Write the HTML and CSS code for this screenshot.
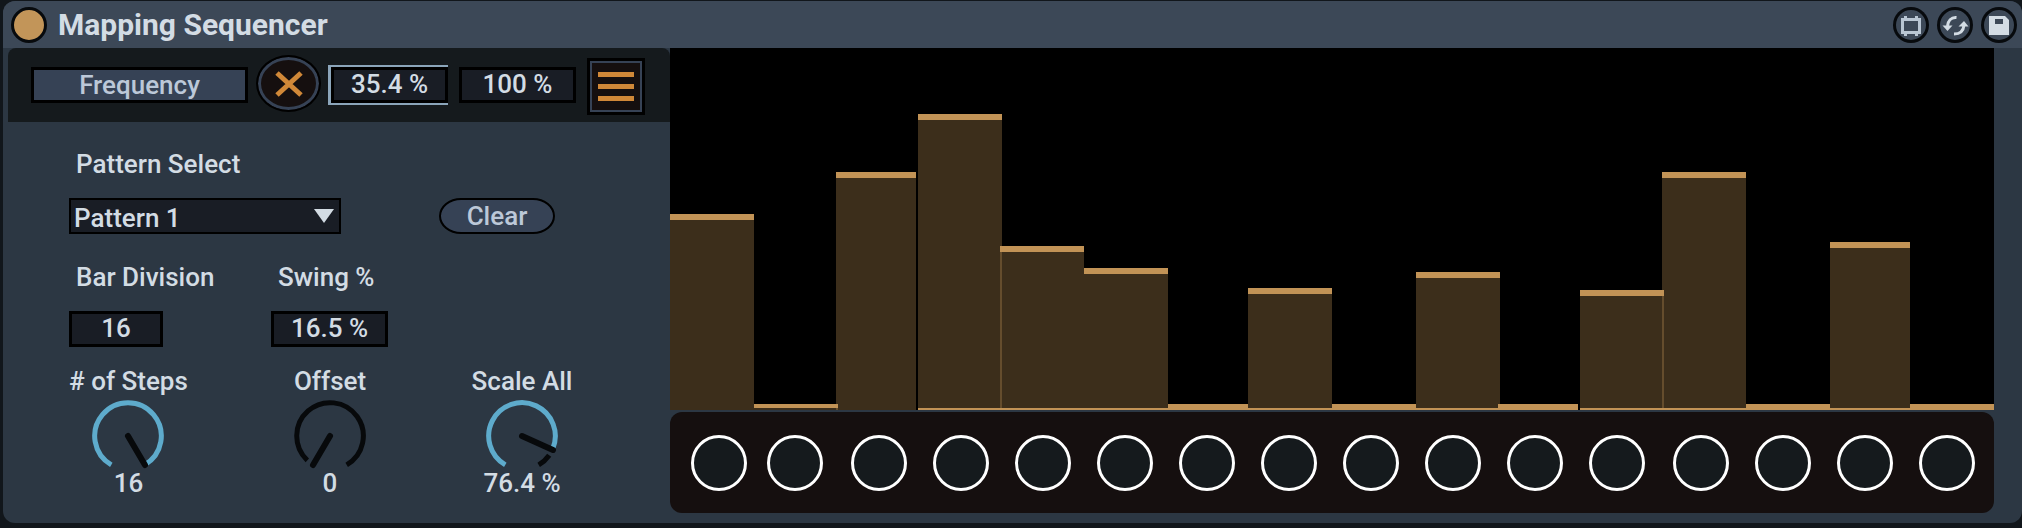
FILE: index.html
```html
<!DOCTYPE html>
<html lang="en">
<head>
<meta charset="utf-8">
<title>Mapping Sequencer</title>
<link rel="stylesheet" href="styles.css">
</head>
<body>
<main class="device">
  <header class="titlebar">
    <button class="power" type="button" aria-label="Device on"></button>
    <h1 class="title">Mapping Sequencer</h1>
    <div class="tools">
      <button class="tool" type="button" aria-label="Open editor">
        <svg viewBox="0 0 36 36"><path d="M9.500 12.500H26.500V25.500H9.500ZM12.500 12V9M23.500 12V9M12.500 26V29M23.500 26V29" fill="none" stroke="#b9c6d3" stroke-width="3"/></svg>
      </button>
      <button class="tool" type="button" aria-label="Hot-swap">
        <svg viewBox="0 0 36 36"><g fill="none" stroke="#d3dce4" stroke-width="3"><path d="M19.500 10.500C14 10 11 14 10.500 19"/><path d="M17 27C23 27 26.500 24 27 18"/></g><g fill="#d3dce4"><path d="M5.500 18.500H15.500L10.500 24Z"/><path d="M21.500 19.500H31.500L27 14Z"/></g></svg>
      </button>
      <button class="tool" type="button" aria-label="Save preset">
        <svg viewBox="0 0 36 36"><path fill-rule="evenodd" d="M8 9H24L28 13V28H8ZM14 12V17H22V12Z" fill="#d3dce4"/></svg>
      </button>
    </div>
  </header>

  <div class="body">
    <section class="side">
      <div class="mapbar">
        <button class="map-target" type="button">Frequency</button>
        <button class="unmap" type="button" aria-label="Remove mapping">
          <svg viewBox="0 0 28 26"><path d="M2 2L26 24M26 2L2 24" stroke="#d08838" stroke-width="5"/></svg>
        </button>
        <span class="focus-frame"><input class="number range-number" type="text" value="35.4 %" aria-label="Minimum"></span>
        <input class="number range-number" type="text" value="100 %" aria-label="Maximum">
        <button class="menu" type="button" aria-label="Mappings"><span class="line"></span><span class="line"></span><span class="line"></span></button>
      </div>

      <form class="controls">
        <div class="row pattern-row">
          <div class="field">
            <label class="label" for="pattern">Pattern Select</label>
            <span class="picker">
              <select id="pattern"><option>Pattern 1</option></select>
              <svg class="arrow" viewBox="0 0 20 14"><path d="M0 0H20L10 14Z"/></svg>
            </span>
          </div>
          <button class="clear" type="button">Clear</button>
        </div>

        <div class="row timing-row">
          <div class="field">
            <label class="label" for="division">Bar Division</label>
            <input class="number division" id="division" type="text" value="16">
          </div>
          <div class="field">
            <label class="label" for="swing">Swing %</label>
            <input class="number range-number" id="swing" type="text" value="16.5 %">
          </div>
        </div>

        <div class="row knob-row">
          <div class="knob">
            <label for="steps">&#35; of Steps</label>
            <span class="dial">
              <svg viewBox="0 0 72 72"><path class="on" d="M19.300 64.800A33.300 33.300 0 1 1 52.700 64.800"/><path class="needle" d="M36 36L53 65"/></svg>
              <input id="steps" type="range" min="1" max="16" value="16">
            </span>
            <output for="steps">16</output>
          </div>
          <div class="knob">
            <label for="offset">Offset</label>
            <span class="dial">
              <svg viewBox="0 0 72 72"><path class="off" d="M13.300 60.300A33.300 33.300 0 1 1 52.700 64.800"/><path class="needle" d="M36 36L19 65"/></svg>
              <input id="offset" type="range" min="0" max="16" value="0">
            </span>
            <output for="offset">0</output>
          </div>
          <div class="knob">
            <label for="scale">Scale All</label>
            <span class="dial">
              <svg viewBox="0 0 72 72"><path class="on" d="M19.300 64.800A33.300 33.300 0 1 1 66.700 48.900"/><path class="off" d="M63.200 55.200A33.300 33.300 0 0 1 52.700 64.800"/><path class="needle" d="M36 36L67 50"/></svg>
              <input id="scale" type="range" min="0" max="100" step="any" value="76.4">
            </span>
            <output for="scale">76.4 %</output>
          </div>
        </div>
      </form>
    </section>

    <section class="sequencer">
      <div class="chart">
        <div class="bar" style="height:54.200%"></div>
        <div class="bar rest wide"></div>
        <div class="bar short" style="height:65.800%"></div>
        <div class="bar based wide" style="height:81.800%"></div>
        <div class="bar based" style="height:45.300%"></div>
        <div class="bar based" style="height:39.300%"></div>
        <div class="bar based rest"></div>
        <div class="bar based" style="height:33.800%"></div>
        <div class="bar based rest"></div>
        <div class="bar based wide" style="height:38.200%"></div>
        <div class="bar based rest short"></div>
        <div class="bar based wide" style="height:33.200%"></div>
        <div class="bar based" style="height:65.800%"></div>
        <div class="bar based rest"></div>
        <div class="bar based" style="height:46.500%"></div>
        <div class="bar based rest"></div>
      </div>
      <div class="lamps">
        <button class="lamp" type="button" aria-label="Step 1"></button>
        <button class="lamp" type="button" aria-label="Step 2"></button>
        <button class="lamp" type="button" aria-label="Step 3"></button>
        <button class="lamp" type="button" aria-label="Step 4"></button>
        <button class="lamp" type="button" aria-label="Step 5"></button>
        <button class="lamp" type="button" aria-label="Step 6"></button>
        <button class="lamp" type="button" aria-label="Step 7"></button>
        <button class="lamp" type="button" aria-label="Step 8"></button>
        <button class="lamp" type="button" aria-label="Step 9"></button>
        <button class="lamp" type="button" aria-label="Step 10"></button>
        <button class="lamp" type="button" aria-label="Step 11"></button>
        <button class="lamp" type="button" aria-label="Step 12"></button>
        <button class="lamp" type="button" aria-label="Step 13"></button>
        <button class="lamp" type="button" aria-label="Step 14"></button>
        <button class="lamp" type="button" aria-label="Step 15"></button>
        <button class="lamp" type="button" aria-label="Step 16"></button>
      </div>
    </section>
  </div>
</main>
</body>
</html>
```

FILE: styles.css
```css
* {
  box-sizing: border-box;
}

body {
  margin: 0;
  padding: 1px 0 5px 3px;
  min-height: 100vh;
  display: flex;
  background: #11161b;
  color: #d3dce4;
  font: 500 26px/32px Roboto, "Liberation Sans", sans-serif;
}

button,
input,
select {
  margin: 0;
  padding: 0;
  color: inherit;
  font: inherit;
}

svg {
  display: block;
}

.device {
  flex: 1;
  display: flex;
  flex-direction: column;
  min-width: 0;
  overflow: hidden;
  border-radius: 12px;
  background: #2c3743;
}

/* Title bar */
.titlebar {
  display: flex;
  align-items: center;
  height: 47px;
  padding: 0 5px 0 8px;
  background: #3c4857;
}

.power {
  width: 36px;
  height: 36px;
  border: 3px solid #070a0d;
  border-radius: 50%;
  background: #c29559;
}

.title {
  margin: 0 auto 0 11px;
  font-size: 30px;
  font-weight: 700;
}

.tools {
  display: flex;
  gap: 8px;
}

.tool {
  width: 36px;
  height: 36px;
  border: 0;
  border-radius: 50%;
  background: none;
  box-shadow: inset 0 0 0 3px #070a0d;
}

.body {
  flex: 1;
  display: flex;
  padding: 0 28px 10px 5px;
}

/* Left side */
.side {
  flex: none;
  width: 662px;
}

.mapbar {
  display: flex;
  align-items: center;
  height: 74px;
  padding: 7px 25px 7px 23px;
  border-radius: 8px 8px 0 0;
  background: #151a1d;
}

.map-target,
.clear {
  height: 36px;
  border: 3px solid #000;
  background: #364255;
  color: #bcc8d8;
  line-height: 30px;
}

.map-target {
  width: 217px;
}

.unmap {
  display: grid;
  place-items: center;
  align-self: flex-start;
  width: 65px;
  height: 57px;
  margin: 0 7px 0 8px;
  border: 2px solid #000;
  border-radius: 50%;
  background: #150f0f;
  box-shadow: inset 0 0 0 3px #364255;
}

.unmap svg {
  width: 28px;
  height: 26px;
}

.number {
  height: 36px;
  padding-bottom: 2px;
  border: 3px solid #000;
  border-radius: 0;
  background: #191d25;
  text-align: center;
}

.range-number {
  width: 117px;
}

.focus-frame {
  display: flex;
  margin-right: 11px;
  border: solid #8ba5ba;
  border-width: 2px 0 2px 3px;
}

.menu {
  display: grid;
  align-content: center;
  justify-content: center;
  align-self: flex-end;
  gap: 7px;
  width: 58px;
  height: 57px;
  margin-left: auto;
  border: 3px solid #000;
  background: #150f0f;
  box-shadow: inset 0 0 0 2px #364255;
}

.line {
  width: 36px;
  height: 5px;
  background: #d08838;
}

.controls {
  padding: 26px 0 0 61px;
}

.row {
  display: grid;
  align-items: end;
}

.pattern-row {
  grid-template-columns: 370px 116px;
}

.timing-row {
  grid-template-columns: 202px 117px;
  margin-top: 27px;
}

.knob-row {
  grid-template-columns: 203px 192px 116px;
  margin-top: 18px;
}

.field {
  display: flex;
  flex-direction: column;
  align-items: flex-start;
  gap: 18px;
}

.label {
  padding-left: 7px;
  white-space: nowrap;
}

.picker {
  display: grid;
  align-items: center;
  width: 272px;
}

.picker select,
.arrow {
  grid-area: 1 / 1;
}

.picker select {
  appearance: none;
  height: 36px;
  padding: 2px 3px 0;
  border: 2px solid #000;
  border-radius: 0;
  background: #191d25;
}

.arrow {
  justify-self: end;
  width: 20px;
  height: 14px;
  margin-right: 7px;
  fill: #d3dce4;
  pointer-events: none;
}

.clear {
  border-width: 2px;
  border-radius: 22px / 18px;
}

.division {
  width: 94px;
}

.knob {
  display: grid;
  justify-items: center;
  width: 116px;
  white-space: nowrap;
}

.dial {
  display: grid;
  width: 72px;
  height: 72px;
  margin: 3px 0 -5px;
}

.dial > * {
  grid-area: 1 / 1;
  width: 72px;
  height: 72px;
}

.dial input {
  opacity: 0;
}

.dial path {
  fill: none;
  stroke-width: 5;
}

.dial .on {
  stroke: #5eabcc;
}

.dial .off {
  stroke: #07090b;
}

.dial .needle {
  stroke: #07090b;
  stroke-width: 6;
  stroke-linecap: round;
}

/* Step values */
.sequencer {
  flex: 1;
  display: flex;
  flex-direction: column;
  min-width: 0;
}

.chart {
  flex: 1;
  display: grid;
  grid-template-columns: 84fr 82fr 82fr 82fr 84fr 84fr 80fr 84fr 84fr 82fr 82fr 82fr 84fr 84fr 80fr 84fr;
  grid-template-rows: 100%;
  align-items: end;
  min-height: 360px;
  background: #000;
}

.bar {
  border-top: 6px solid #c29356;
  background: rgba(194, 147, 86, 0.31);
  background-clip: padding-box;
}

.based {
  border-bottom: 2px solid #c29356;
}

.rest {
  height: 6px;
  border-top-width: 4px;
}

/* Neighbouring steps overlap or part by one grid unit */
.wide {
  margin-right: -2px;
}

.short {
  margin-right: 2px;
}

.lamps {
  display: grid;
  grid-template-columns: 76fr 84fr repeat(9, 82fr) 84fr repeat(3, 82fr) 56px;
  align-items: center;
  height: 101px;
  margin-top: 2px;
  padding: 0 19px 0 21px;
  border-radius: 12px;
  background: #150f0f;
}

.lamp {
  width: 56px;
  height: 56px;
  border: 3px solid #fff;
  border-radius: 50%;
  background: #151a1d;
}
```
